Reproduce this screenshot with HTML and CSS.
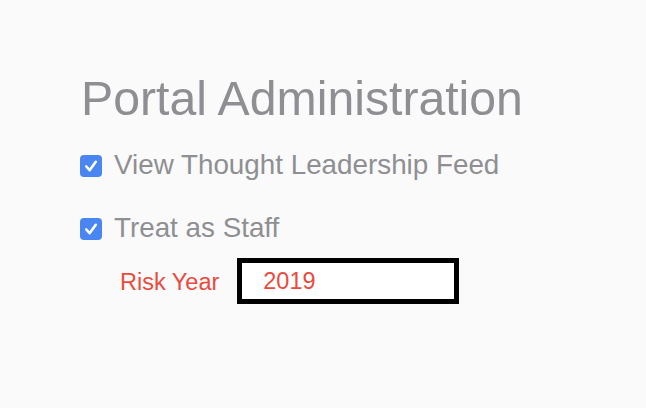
FILE: index.html
```html
<!DOCTYPE html>
<html lang="en">
<head>
<meta charset="utf-8">
<title>Portal Administration</title>
<link rel="stylesheet" href="styles.css">
</head>
<body>
<main class="admin">
  <h1 class="title">Portal Administration</h1>
  <label class="check-row row-first">
    <span class="check-box"><svg viewBox="0 0 22 22" width="22" height="22"><path d="M6.3 11.5 L9.6 15.2 L15.8 6.8" fill="none" stroke="#fff" stroke-width="2.6" stroke-linecap="round" stroke-linejoin="round"/></svg></span>
    <span class="check-label">View Thought Leadership Feed</span>
  </label>
  <label class="check-row row-second">
    <span class="check-box"><svg viewBox="0 0 22 22" width="22" height="22"><path d="M6.3 11.5 L9.6 15.2 L15.8 6.8" fill="none" stroke="#fff" stroke-width="2.6" stroke-linecap="round" stroke-linejoin="round"/></svg></span>
    <span class="check-label">Treat as Staff</span>
  </label>
  <div class="field-row">
    <span class="field-label">Risk Year</span>
    <div class="field-input">2019</div>
  </div>
</main>
</body>
</html>
```
FILE: styles.css
```css
html, body {
  margin: 0;
  padding: 0;
  background: #fafafa;
}
body {
  font-family: "Liberation Sans", Arial, sans-serif;
  width: 646px;
  height: 408px;
  overflow: hidden;
}
.admin {
  display: flex;
  flex-direction: column;
  align-items: flex-start;
  padding: 71px 0 0 80px;
}
.title {
  margin: 0 0 0 1px;
  font-weight: normal;
  font-size: 48.2px;
  line-height: 54px;
  color: #8f8f93;
}
.check-row {
  display: flex;
  align-items: center;
  gap: 12px;
  height: 32px;
}
.row-first {
  margin-top: 24px;
}
.row-second {
  margin-top: 31px;
}
.check-box {
  width: 22px;
  height: 22px;
  border-radius: 4px;
  background: #4a86f2;
  display: flex;
  margin-top: 2px;
}
.check-label {
  font-size: 27.8px;
  line-height: 32px;
  color: #8f8f93;
}
.field-row {
  display: flex;
  align-items: center;
  margin-top: 14px;
  margin-left: 40px;
  gap: 18px;
}
.field-label {
  font-size: 23.5px;
  line-height: 27px;
  color: #ec4a3e;
  margin-top: 3px;
}
.field-input {
  box-sizing: border-box;
  width: 222px;
  height: 46px;
  border: 5px solid #000;
  background: #fff;
  padding-left: 21px;
  font-size: 23.5px;
  line-height: 36px;
  color: #ec4a3e;
}
```
